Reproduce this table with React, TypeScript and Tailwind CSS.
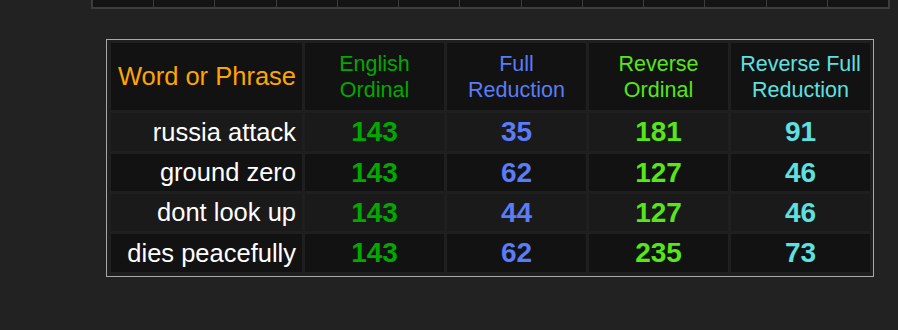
import React from 'react';

const rows = [
  { phrase: 'russia attack', eo: 143, fr: 35, ro: 181, rfr: 91, bg: 'bg-[#1a1a1a]', h: 'h-[38px]' },
  { phrase: 'ground zero', eo: 143, fr: 62, ro: 127, rfr: 46, bg: 'bg-[#121212]', h: 'h-[37px]' },
  { phrase: 'dont look up', eo: 143, fr: 44, ro: 127, rfr: 46, bg: 'bg-[#1a1a1a]', h: 'h-[37px]' },
  { phrase: 'dies peacefully', eo: 143, fr: 62, ro: 235, rfr: 73, bg: 'bg-[#121212]', h: 'h-[38px]' },
];

const headers = [
  { lines: ['English', 'Ordinal'], color: 'text-[#00a800]' },
  { lines: ['Full', 'Reduction'], color: 'text-[#5b7cf7]' },
  { lines: ['Reverse', 'Ordinal'], color: 'text-[#56e619]' },
  { lines: ['Reverse Full', 'Reduction'], color: 'text-[#5fe0e0]' },
];

export default function App() {
  return (
    <div className="h-[330px] w-[898px] bg-[#222222] overflow-hidden" style={{ fontFamily: '"Liberation Sans", Arial, sans-serif' }}>
      {/* tail of the previous table */}
      <div className="ml-[91px] w-[799px] h-[9px] border-x-2 border-b-2 border-[#3d3d3d] flex">
        {Array.from({ length: 13 }).map((_, i) => (
          <div key={i} className={`flex-1 bg-[#141414] ${i > 0 ? 'border-l border-[#3d3d3d]' : ''}`} />
        ))}
      </div>

      <div className="ml-[106px] mt-[30px] w-[768px] border border-[#a8a8a8] bg-[#1f1f1f] pl-[4px] pr-[3px] pt-[3px] pb-[4px]">
        <div className="grid grid-cols-[191px_139px_139px_139px_139px] gap-[3px]">
          {/* header */}
          <div className="h-[67px] bg-[#121212] flex items-center justify-end pr-[6px] text-[25.5px] text-[#ffa500]">
            Word or Phrase
          </div>
          {headers.map((h) => (
            <div key={h.lines.join(' ')} className={`h-[67px] bg-[#121212] flex flex-col items-center justify-center text-[21.5px] leading-[26px] ${h.color}`}>
              <span>{h.lines[0]}</span>
              <span>{h.lines[1]}</span>
            </div>
          ))}

          {rows.map((r) => (
            <React.Fragment key={r.phrase}>
              <div className={`${r.h} ${r.bg} flex items-center justify-end pr-[6px] text-[25.5px] text-white`}>
                {r.phrase}
              </div>
              <div className={`${r.h} ${r.bg} flex items-center justify-center text-[28px] font-bold text-[#00a800]`}>{r.eo}</div>
              <div className={`${r.h} ${r.bg} flex items-center justify-center text-[28px] font-bold text-[#5b7cf7]`}>{r.fr}</div>
              <div className={`${r.h} ${r.bg} flex items-center justify-center text-[28px] font-bold text-[#56e619]`}>{r.ro}</div>
              <div className={`${r.h} ${r.bg} flex items-center justify-center text-[28px] font-bold text-[#5fe0e0]`}>{r.rfr}</div>
            </React.Fragment>
          ))}
        </div>
      </div>
    </div>
  );
}
